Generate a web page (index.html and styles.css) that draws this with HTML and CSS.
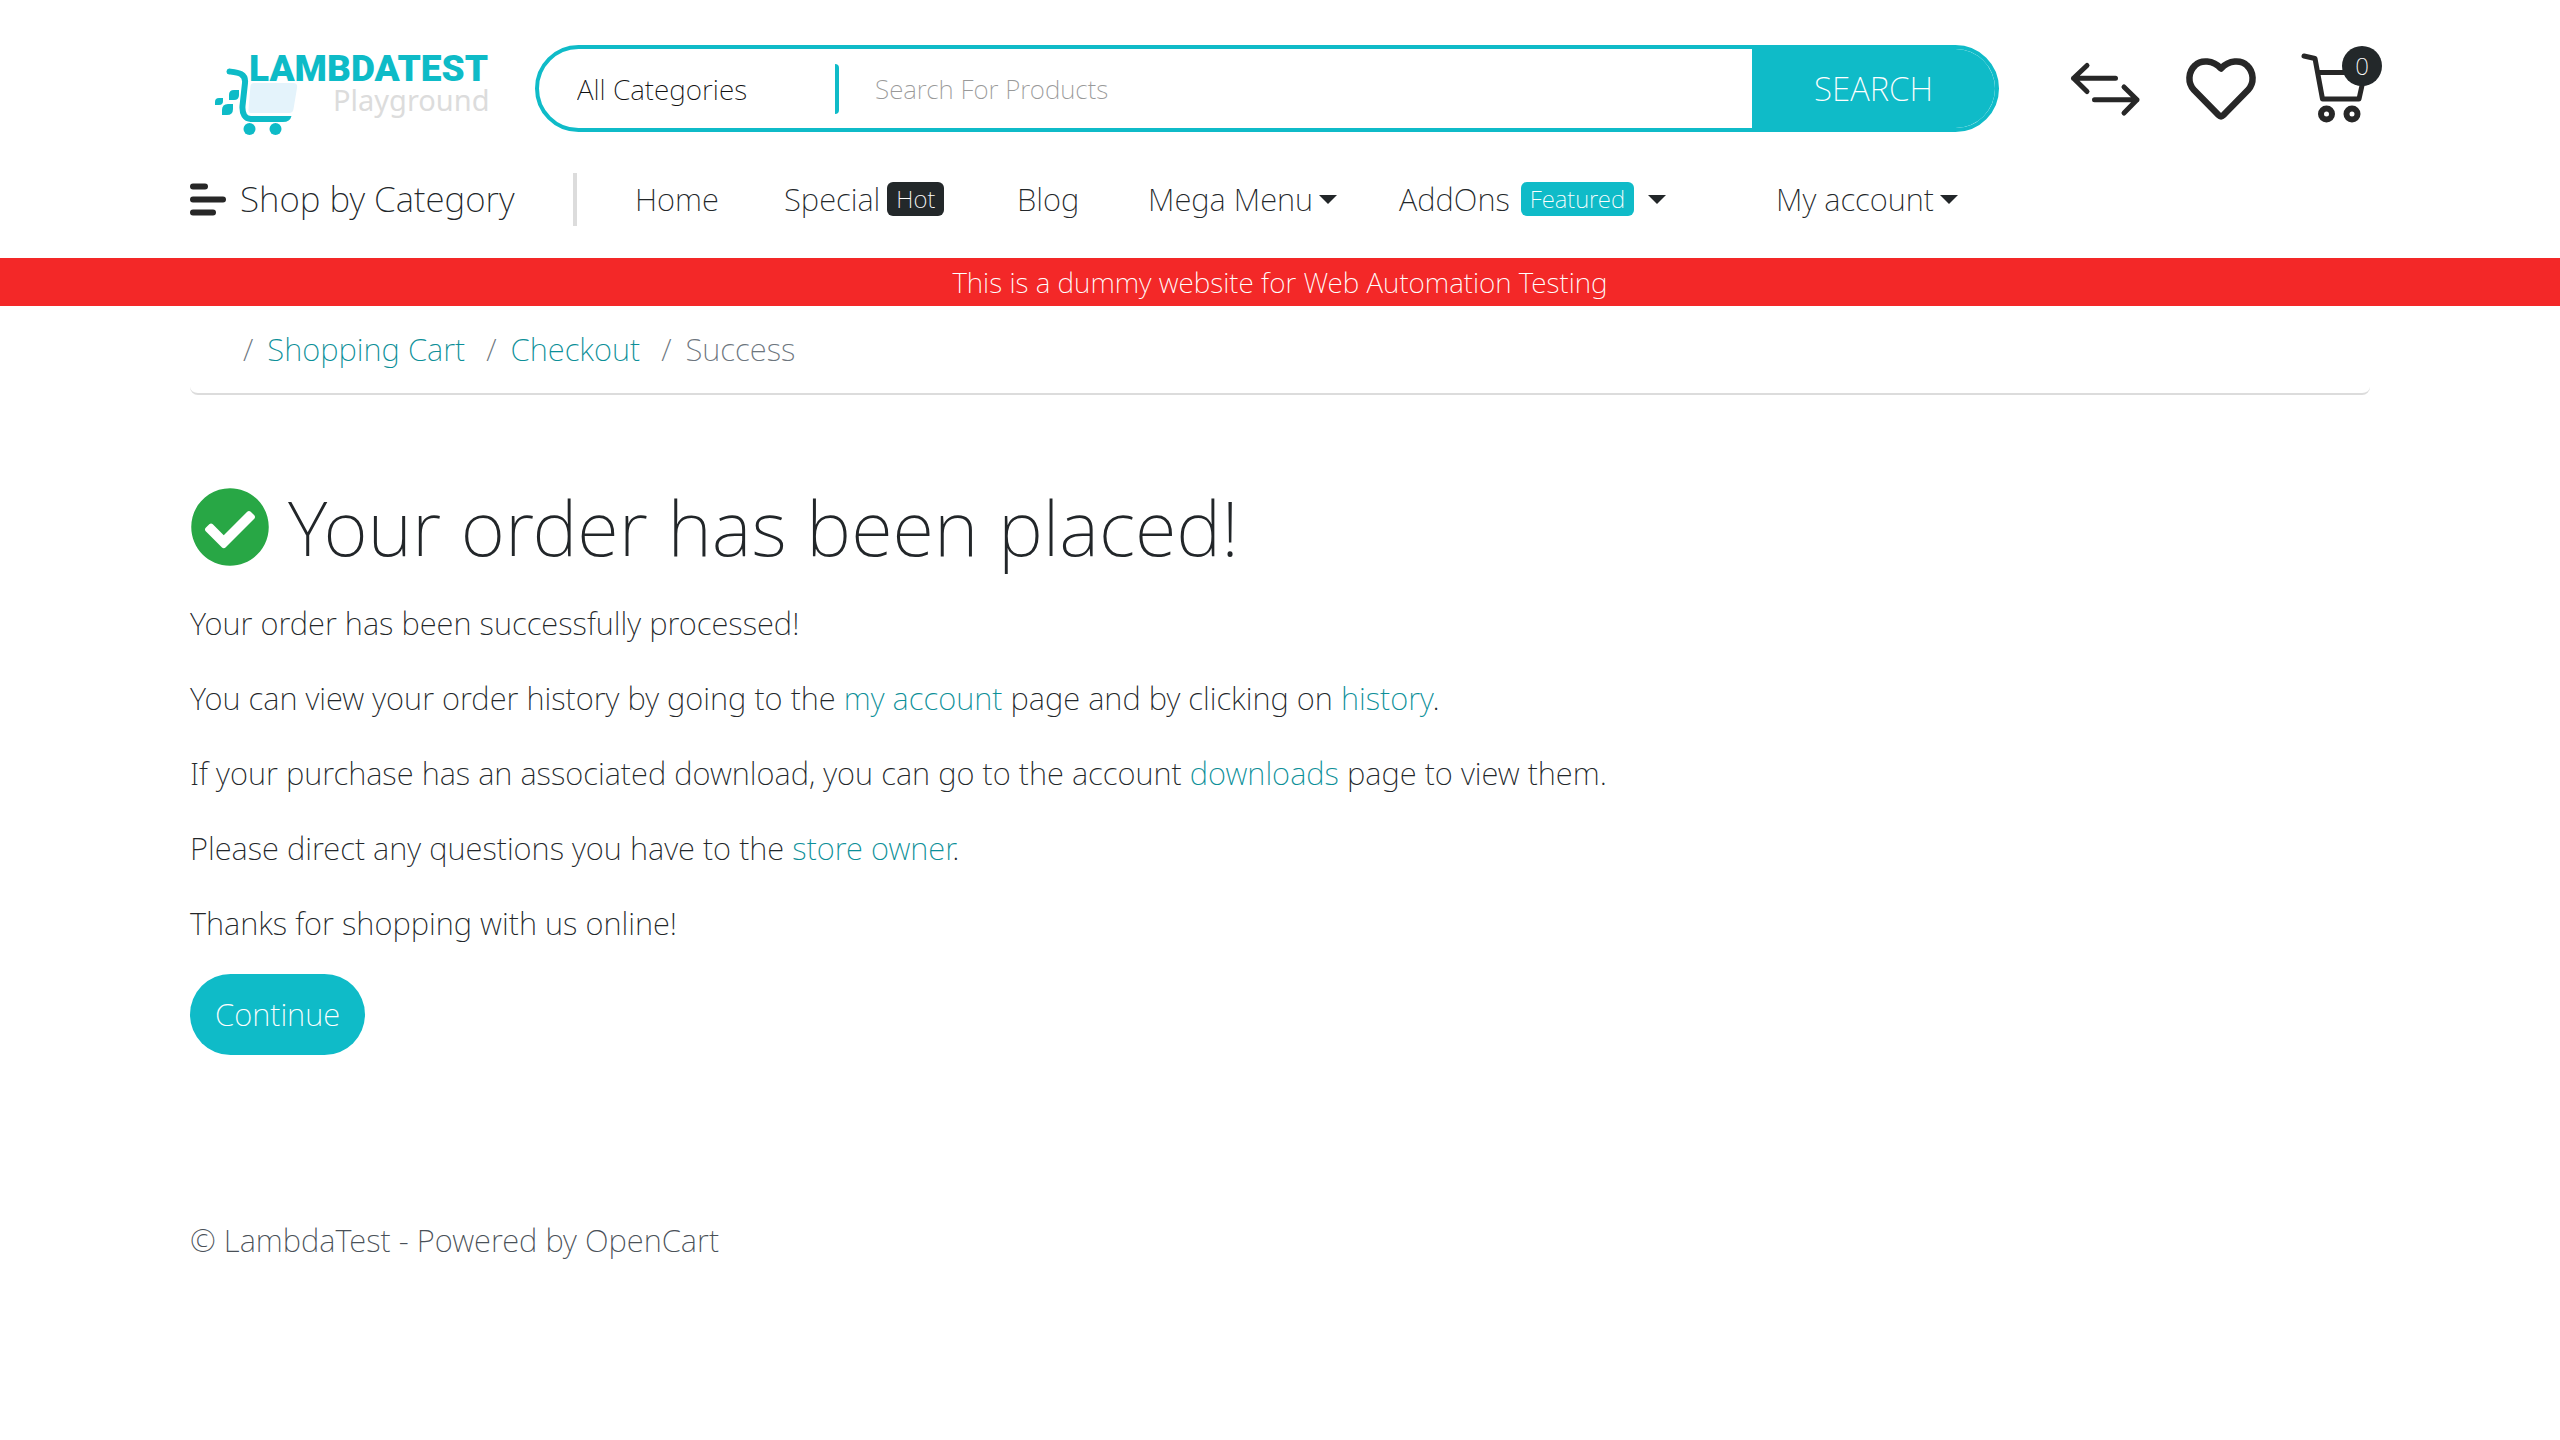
FILE: index.html
```
<!DOCTYPE html>
<html lang="en">
<head>
<meta charset="utf-8">
<meta name="viewport" content="width=device-width, initial-scale=1">
<title>Your order has been placed!</title>
<link rel="stylesheet" href="styles.css">
</head>
<body>
<header class="container">
  <div class="topbar">
    <a class="logo" href="#" aria-label="LambdaTest Playground">
      <svg viewBox="-10 5 304 92" width="304" height="92">
        <g fill="#0ebbc7">
          <path d="M34 50H39V55Q39 60 34 60H29V55Q29 50 34 50Z"/>
          <path d="M19 58H23V61Q23 65 19 65H15V62Q15 58 19 58Z"/>
          <path d="M28 64H33V69Q33 75 27 75H22V70Q22 64 28 64Z"/>
          <circle cx="49.500" cy="89" r="6"/>
          <circle cx="75.500" cy="89" r="6"/>
          <path d="M50 76H91.500Q90 82 83 82H50Z"/>
        </g>
        <path d="M29.500 31.500C38 32.500 46 33 45 43L42.500 66C42 74 45 79 51 79H60" fill="none" stroke="#0ebbc7" stroke-width="6" stroke-linecap="round"/>
        <path d="M54 43H93Q98 43 97 48L93.500 69Q93 73 89 73H51Q48 73 48.500 69L50.500 46Q51 43 54 43Z" fill="#e4f3fb"/>
        <text class="logo-name" x="49" y="41">LAMBDATEST</text>
        <text class="logo-sub" x="133" y="71">Playground</text>
      </svg>
    </a>
    <form class="search">
      <select class="search-category" aria-label="Category"><option>All Categories</option></select>
      <input class="search-input" type="text" placeholder="Search For Products" aria-label="Search For Products">
      <button class="search-button" type="button">SEARCH</button>
    </form>
    <div class="actions">
      <a href="#" aria-label="Compare"><svg viewBox="16 5 80 87" width="80" height="87"><path d="M65.500 38.300H23.500M37 25.500L23.500 38.300L37 51.500M44.500 59.700H87M74 47L87 59.700L74 73" stroke-width="5"/></svg></a>
      <a href="#" aria-label="Wish list"><svg viewBox="128 5 80 87" width="80" height="87"><path d="M171 28.500C163 20 151 19.500 145 25.500C138 32 137.500 43 144 50L168.500 75Q171 77.500 173.500 75L198 50C204.500 43 204 32 197 25.500C191 19.500 179 20 171 28.500Z" stroke-width="6.500"/></svg></a>
      <a class="cart" href="#" aria-label="Cart, 0 items"><svg viewBox="240 5 80 87" width="80" height="87"><path d="M254 16L265 18.500L272.500 59H309L315 32M269 32.500H300" stroke-width="5"/><circle cx="276.500" cy="74" r="5.500" stroke-width="6"/><circle cx="302" cy="74" r="5.500" stroke-width="6"/></svg><span class="cart-count">0</span></a>
    </div>
  </div>
  <nav class="navbar" aria-label="Main">
    <a class="shop" href="#">
      <svg width="36" height="33" viewBox="0 0 36 33"><path d="M3 3.500H15M3 16.500H33M3 29.500H23" stroke="#272727" stroke-width="6" stroke-linecap="round"/></svg>
      <span>Shop by Category</span>
    </a>
    <div class="menu">
      <a href="#">Home</a>
      <a href="#">Special<span class="badge badge-dark">Hot</span></a>
      <a href="#">Blog</a>
      <a href="#">Mega Menu<span class="caret"></span></a>
      <a href="#">AddOns<span class="badge badge-accent">Featured</span><span class="caret caret-spaced"></span></a>
      <a href="#">My account<span class="caret"></span></a>
    </div>
  </nav>
</header>
<div class="notice">This is a dummy website for Web Automation Testing</div>
<main class="container">
  <nav aria-label="Breadcrumb">
    <ol class="breadcrumb">
      <li></li>
      <li><a href="#">Shopping Cart</a></li>
      <li><a href="#">Checkout</a></li>
      <li>Success</li>
    </ol>
  </nav>
  <h1 class="title">
    <svg width="80" height="80" viewBox="0 0 512 512"><path fill="#28a745" d="M504 256c0 136.967-111.033 248-248 248S8 392.967 8 256 119.033 8 256 8s248 111.033 248 248zM227.314 387.314l184-184c6.248-6.248 6.248-16.379 0-22.627l-22.627-22.627c-6.248-6.249-16.379-6.249-22.628 0L216 308.118l-70.059-70.059c-6.248-6.248-16.379-6.248-22.628 0l-22.627 22.627c-6.248 6.248-6.248 16.379 0 22.627l104 104c6.249 6.249 16.379 6.249 22.628.001z"/></svg>
    <span>Your order has been placed!</span>
  </h1>
  <div class="message">
    <p>Your order has been successfully processed!</p>
    <p>You can view your order history by going to the <a href="#">my account</a> page and by clicking on <a href="#">history</a>.</p>
    <p>If your purchase has an associated download, you can go to the account <a href="#">downloads</a> page to view them.</p>
    <p>Please direct any questions you have to the <a href="#">store owner</a>.</p>
    <p>Thanks for shopping with us online!</p>
  </div>
  <a class="button" href="#">Continue</a>
</main>
<footer class="container footer">© LambdaTest - Powered by OpenCart</footer>
</body>
</html>
```
FILE: styles.css
```
* {
  box-sizing: border-box;
}

body {
  margin: 0;
  background: #fff;
  color: #222629;
  font: 200 31px/48px "Noto Sans", sans-serif;
}

a {
  color: #0b8f98;
  text-decoration: none;
}

.container {
  max-width: 2212px;
  margin: 0 auto;
  padding: 0 16px;
}

/* Top bar: logo, search, actions */
.topbar {
  display: flex;
  height: 132px;
  padding-top: 45px;
}

.logo svg {
  display: block;
}

.logo-name {
  fill: #0ebbc7;
  font: 900 37px Roboto, sans-serif;
}

.logo-sub {
  fill: #dcdcdc;
  font: 400 29px "Noto Sans", sans-serif;
}

.search {
  display: flex;
  flex: 1;
  align-items: center;
  height: 87px;
  margin: 0 67px 0 41px;
  border: 4px solid #0fbbc8;
  border-radius: 44px;
  overflow: hidden;
}

.search-category,
.search-input {
  border: 0;
  background: none;
  font: inherit;
  outline: 0;
}

.search-category {
  appearance: none;
  width: 300px;
  height: 50px;
  padding: 0 0 0 38px;
  border-right: 4px solid #0fbbc8;
  border-radius: 4px;
  color: #111;
  font-size: 28px;
  line-height: 50px;
}

.search-input {
  flex: 1;
  min-width: 0;
  height: 79px;
  padding: 0 36px;
  font-size: 26px;
}

.search-input::placeholder {
  color: #999;
  opacity: 1;
}

.search-button {
  align-self: stretch;
  width: 243px;
  padding: 0;
  border: 0;
  background: #0fbbc8;
  color: #fff;
  font: inherit;
  font-size: 33px;
}

.actions {
  display: flex;
  gap: 32px;
}

.actions svg {
  display: block;
  fill: none;
  stroke: #272727;
  stroke-linecap: round;
  stroke-linejoin: round;
}

.cart {
  position: relative;
}

.cart-count {
  position: absolute;
  top: 1px;
  right: -12px;
  width: 40px;
  height: 40px;
  border-radius: 50%;
  background: #23282a;
  color: #fff;
  font-size: 24px;
  line-height: 40px;
  text-align: center;
}

/* Navigation */
.navbar {
  display: flex;
  align-items: center;
  height: 126px;
  padding: 14px 0 6px;
}

.navbar a {
  display: flex;
  align-items: center;
  color: #222629;
  white-space: nowrap;
}

.navbar .shop {
  gap: 14px;
  width: 387px;
  height: 53px;
  border-right: 4px solid #dcdcdc;
  font-size: 35px;
  line-height: 52px;
}

.menu {
  display: grid;
  grid-template-columns: 149px 233px 131px 251px 377px auto;
  padding-left: 58px;
}

.badge {
  height: 34px;
  margin-left: 7px;
  padding: 0 9px;
  border-radius: 6px;
  color: #fff;
  font-size: 24px;
  line-height: 34px;
}

.badge-dark {
  background: #23282a;
}

.badge-accent {
  margin-left: 11px;
  background: #0fbbc8;
}

.caret {
  margin-left: 6px;
  border: 9px solid transparent;
  border-top-color: #222629;
  border-bottom: 0;
}

.caret-spaced {
  margin-left: 14px;
}

.notice {
  background: #f32828;
  color: #fff;
  font-size: 28px;
  line-height: 48px;
  text-align: center;
}

/* Breadcrumb */
.breadcrumb {
  display: flex;
  gap: 21px;
  height: 89px;
  margin: 0 0 80px;
  padding: 19px 0 0 32px;
  border-bottom: 2px solid #dcdcdc;
  border-radius: 8px;
  color: #6c757d;
  list-style: none;
}

.breadcrumb li + li::before {
  content: "/";
  margin-right: 14px;
  color: #6c757d;
}

/* Order message */
.title {
  display: flex;
  align-items: center;
  gap: 18px;
  height: 104px;
  margin: 0 0 20px;
  font-size: 76px;
  font-weight: 200;
  line-height: 108px;
}

.message p {
  margin: 0 0 27px;
}

.button {
  display: inline-block;
  padding: 16px 25px;
  border-radius: 41px;
  background: #0fbbc8;
  color: #fff;
  line-height: 49px;
}

.footer {
  margin-top: 161px;
  padding-bottom: 64px;
  color: #495057;
}
```
